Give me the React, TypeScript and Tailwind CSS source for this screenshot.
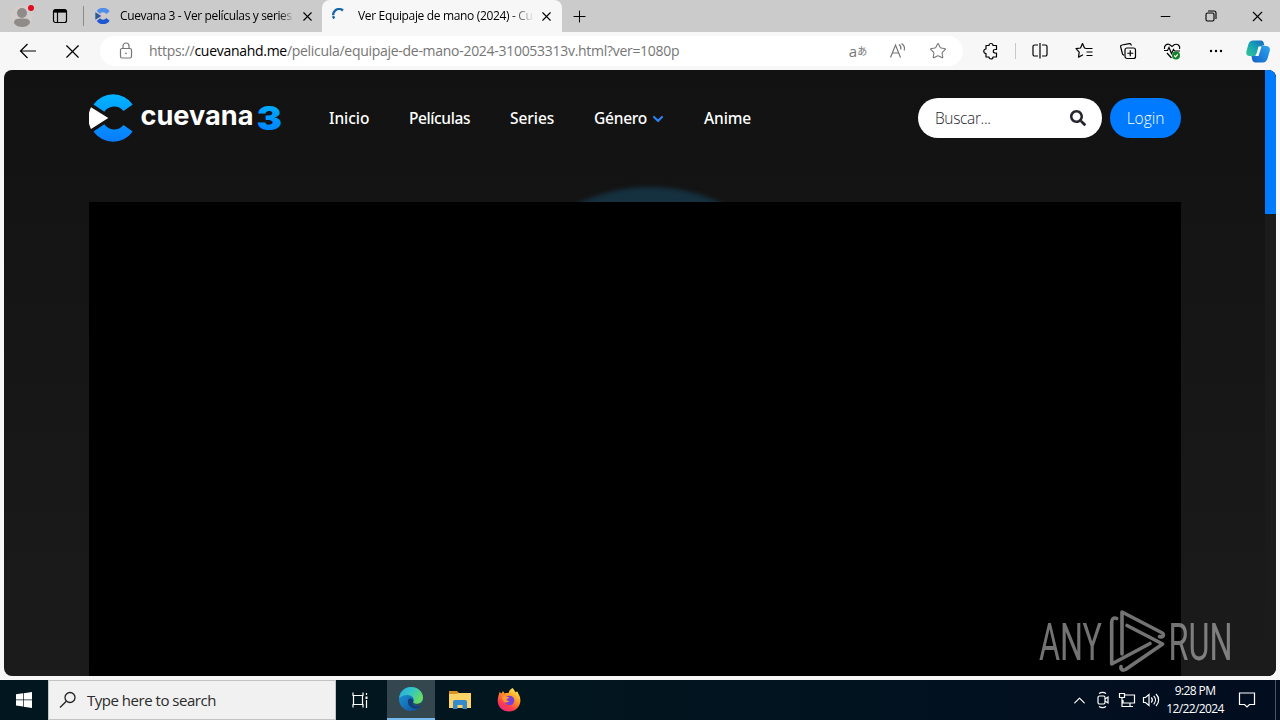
import React, { ReactNode } from "react"
import { X, Plus, Minus, ChevronDown, ChevronUp, Star } from "lucide-react"
import { FaSearch } from "react-icons/fa"

const navLinks = [
    { name: 'Inicio', width: 'w-10', spacing: 'tracking-[-0.05px]' },
    { name: 'Películas', width: 'w-[61px]', spacing: 'tracking-[-0.4px]' },
    { name: 'Series', width: 'w-11', spacing: 'tracking-[-0.05px]' },
    { name: 'Género', width: 'w-[70px]', spacing: 'tracking-[-0.25px]', menu: true },
    { name: 'Anime', width: 'w-12', spacing: 'tracking-[-0.1px]' },
]

const Cell = ({ children, className = 'w-11' }: { children: ReactNode, className?: string }) => (
    <div className={`flex h-full shrink-0 items-center justify-center ${className}`}>{children}</div>
)

const TabStrip = () => {
    return (
        <div className="flex h-8 w-full items-center bg-[#cbcbcb] text-black">
            <Cell className="w-11">
                <svg width="28" height="26" viewBox="0 0 28 26">
                    <circle cx="14" cy="13" r="11" fill="#d0cdcb" />
                    <circle cx="14" cy="10" r="5" fill="#8f8b89" />
                    <path d="M6 20c0-4 3-4.500 8-4.500s8 .5 8 4.500c-2 3-5 4-8 4s-6-1-8-4z" fill="#8f8b89" />
                    <circle cx="23" cy="5" r="3" fill="#e00b1c" />
                </svg>
            </Cell>
            <Cell className="w-8">
                <svg width="16" height="16" viewBox="0 0 16 16" fill="none" stroke="#000" strokeWidth="1.200">
                    <rect x="1.500" y="1.500" width="13" height="13" rx="2" />
                    <path d="M1.500 4h13M5.500 4v10.500" />
                    <path d="M2 3h12" strokeWidth="2.500" />
                </svg>
            </Cell>
            <div className="ml-[7px] h-5 w-px bg-[#8a8a8a]" />
            <div className="flex h-full w-[238px] items-center pl-[11px]">
                <svg width="16" height="16" viewBox="0 0 48 48">
                    <path d="M44 10A24 24 0 0 0 5 9l10 8a12 12 0 0 1 19 1z" fill="#4f8dec" />
                    <path d="M44 38A24 24 0 0 1 5 39l10-8a12 12 0 0 0 19-1z" fill="#1e57d0" />
                    <path d="M1 13l18 11L1 35z" fill="#31559d" />
                </svg>
                <div className="ml-[9px] w-[174px] bg-linear-to-r from-black from-90% to-[#cbcbcb] bg-clip-text text-xs whitespace-nowrap text-transparent tracking-[-0.36px]">Cuevana 3 - Ver películas y series</div>
                <X className="ml-[6px]" size={15} strokeWidth={1.800} />
            </div>
            <div className="flex h-full w-[240px] items-center rounded-t-lg bg-[#f7f7f7] pl-[10px]">
                <svg width="16" height="16" viewBox="0 0 16 16" fill="none" stroke="#1665ae" strokeWidth="2.400">
                    <path d="M2.200 10.500A6 6 0 0 1 11 2.500" strokeDasharray="2.600 .8 20" />
                </svg>
                <div className="ml-[10px] w-[176px] bg-linear-to-r from-black from-84% to-[#f7f7f7] bg-clip-text text-xs whitespace-nowrap text-transparent tracking-[-0.34px]">Ver Equipaje de mano (2024) - Cu</div>
                <X className="ml-[5px]" size={15} strokeWidth={1.800} />
            </div>
            <Cell className="w-[35px]"><Plus size={19} strokeWidth={1.300} /></Cell>
            <div className="ml-auto flex h-full">
                <Cell className="w-[46px]"><Minus size={15} strokeWidth={1.600} /></Cell>
                <Cell className="w-[46px]">
                    <svg width="12" height="12" viewBox="0 0 12 12" fill="none" stroke="#000" strokeWidth="1.100">
                        <rect x="1" y="3" width="8" height="8" rx="1.500" />
                        <path d="M3 1h6a2 2 0 0 1 2 2v6" />
                    </svg>
                </Cell>
                <Cell className="w-[46px]"><X size={17} strokeWidth={1.600} /></Cell>
            </div>
        </div>
    )
}

const Toolbar = () => {
    return (
        <div className="flex h-[38px] w-full items-center bg-[#f7f7f7] text-black">
            <Cell className="ml-1.5 w-11">
                <svg width="18" height="18" viewBox="0 0 18 18" fill="none" stroke="#000" strokeWidth="1.200"><path d="M17 9H1.500M8.500 2L1.500 9l7 7" /></svg>
            </Cell>
            <Cell><X size={23} strokeWidth={1.200} /></Cell>
            <div className="ml-1.5 flex h-[30px] w-[863px] shrink-0 items-center rounded-full bg-white pl-[17px] text-[#767676]">
                <svg width="18" height="18" viewBox="0 0 18 18" fill="none" stroke="currentColor" strokeWidth="1.200">
                    <rect x="3.500" y="6.500" width="11" height="9.500" rx="1.500" />
                    <path d="M6 6.500V4a3 3 0 0 1 6 0v2.500" />
                    <circle cx="9" cy="11.300" r=".9" fill="currentColor" stroke="none" />
                </svg>
                <div className="ml-[14px] text-sm whitespace-nowrap tracking-[-0.29px]">https://<span className="text-black">cuevanahd.me</span>/pelicula/equipaje-de-mano-2024-310053313v.html?ver=1080p</div>
                <div className="ml-auto flex h-full items-center pr-[5px]">
                    <Cell className="w-10">
                        <span className="flex items-center font-['Open_Sans','Noto_Sans_CJK_JP',sans-serif] leading-none"><span className="text-[15px]">a</span><span className="text-[10px]">あ</span></span>
                    </Cell>
                    <Cell className="w-10">
                        <svg width="18" height="18" viewBox="0 0 18 18" fill="none" stroke="currentColor" strokeWidth="1.200">
                            <path d="M1.500 15.500L6.500 3l5 12.500M3.300 11h6.500M10 2.500c1.700 1.200 2.200 3 1.700 5M12.500 1.500c3 2 3.500 4.500 2.700 7" />
                        </svg>
                    </Cell>
                    <Cell className="w-10"><Star size={18} strokeWidth={1.400} /></Cell>
                </div>
            </div>
            <Cell className="ml-1.5 w-11">
                <svg width="18" height="18" viewBox="0 0 18 18" fill="none" stroke="#000" strokeWidth="1.200" strokeLinejoin="round">
                    <path d="M4 3.500h3a2 2 0 0 1 4 0h3.500v4h-1.500a1.700 1.700 0 0 0 0 3.500h1.500v4H11a2 2 0 0 1-4 0H4v-3.500a2.200 2.200 0 0 1 0-4.500z" />
                </svg>
            </Cell>
            <div className="mx-0.5 h-4 w-px shrink-0 bg-[#c9c9c9]" />
            <Cell>
                <svg width="18" height="18" viewBox="0 0 18 18" fill="none" stroke="#000" strokeWidth="1.200">
                    <path d="M7 3H3.500a1.500 1.500 0 0 0-1.500 1.500v8A1.500 1.500 0 0 0 3.500 14H7M11 3h3.500A1.500 1.500 0 0 1 16 4.500v8a1.500 1.500 0 0 1-1.500 1.500H11M9 1v15.500" />
                </svg>
            </Cell>
            <Cell>
                <svg width="18" height="18" viewBox="0 0 18 18" fill="none" stroke="#000" strokeWidth="1.200" strokeLinejoin="round">
                    <path d="M11 6.500h6.500M11.500 10h6M11.500 13.500h6M11 6.500L9.500 6 7.500 1.500 5.500 6l-4.500.7 3.200 3.500-.7 4.900 4.500-2.300" />
                </svg>
            </Cell>
            <Cell>
                <svg width="18" height="18" viewBox="0 0 18 18" fill="none" stroke="#000" strokeWidth="1.200">
                    <rect x="6" y="6" width="10.500" height="10.500" rx="2" />
                    <path d="M11.250 8.300v6M8.300 11.250h6M12.500 3.500L12 2.500a1.500 1.500 0 0 0-1.700-.9L3 3A1.500 1.500 0 0 0 1.700 5L3.500 12a2 2 0 0 0 1.500 1.200" />
                </svg>
            </Cell>
            <Cell>
                <svg width="18" height="18" viewBox="0 0 18 18" fill="none" stroke="#000" strokeWidth="1.200">
                    <path d="M1.500 7C.8 3.500 4 1.500 6.500 2.500L9 4.500l2.500-2C15 1.500 17.500 4 16.500 7M1 8.500h3.500l1.500-3 2.500 6 2-4 1 1.500h5.500M4 11l4.500 5" />
                    <circle cx="13" cy="13.500" r="4" fill="#16812a" stroke="none" />
                    <path d="M11.200 13.500l1.300 1.300 2.300-2.500" stroke="#fff" />
                </svg>
            </Cell>
            <Cell>
                <svg width="16" height="16" viewBox="0 0 16 16"><circle cx="3" cy="8" r="1.200" /><circle cx="8" cy="8" r="1.200" /><circle cx="13" cy="8" r="1.200" /></svg>
            </Cell>
            <Cell className="w-10">
                <svg width="24" height="23" viewBox="0 0 24 23">
                    <defs>
                        <linearGradient id="copL" x1="0" y1="1" x2="1" y2="0"><stop offset="0" stopColor="#35c795" /><stop offset=".5" stopColor="#17a3b5" /><stop offset="1" stopColor="#1565c0" /></linearGradient>
                        <linearGradient id="copR" x1="0" y1="1" x2="1" y2="0"><stop offset="0" stopColor="#1460c8" /><stop offset="1" stopColor="#2ba6f0" /></linearGradient>
                    </defs>
                    <path d="M7 .5h8c2 0 2.500 1.500 3 3.500l.5 1.500c-4 0-5 1.500-6 5L11 16H3.500C.5 16-.3 13.500.5 11l2-7C3.200 1.800 4.800.5 7 .5z" fill="url(#copL)" />
                    <path d="M17 22.500H9.500c-2 0-3-1.500-3.500-3.500l-.5-3H8c3 0 4-1.500 5-5l1.500-5H20c3 0 4.500 2 3.700 5l-2 7c-.7 2.500-2.300 4.500-4.700 4.500z" fill="url(#copR)" />
                    <path d="M12.500 6.500h3l-3 9.500H9.200c1.800-2 2.300-6.500 3.300-9.500z" fill="#fff" />
                </svg>
            </Cell>
        </div>
    )
}

const Logo = () => (
    <svg width="194" height="50" viewBox="0 -1 194 50">
        <defs>
            <linearGradient id="brand" x1="0" y1="0" x2="0" y2="1"><stop offset="0" stopColor="#00b7ff" /><stop offset="1" stopColor="#0077ff" /></linearGradient>
            <linearGradient id="brandC" gradientUnits="userSpaceOnUse" x1="0" y1="0" x2="0" y2="48"><stop offset="0" stopColor="#00b4ff" /><stop offset="1" stopColor="#0a7cff" /></linearGradient>
        </defs>
        <path d="M43.700 10.500A24 24 0 0 0 4.500 10.500L15.300 17.700A12 12 0 0 1 34.500 17zM43.700 37.500A24 24 0 0 1 4.500 37.500L15.300 30.300A12 12 0 0 0 34.500 31z" fill="url(#brandC)" />
        <path d="M2 13.300L19.300 24 2 35A25 25 0 0 1 2 13.300z" fill="#fff" />
        <text x="51.500" y="31.300" textLength="113" lengthAdjust="spacingAndGlyphs" className="fill-white font-['Inter',sans-serif] text-[27px] font-bold">cuevana</text>
        <text x="167.500" y="36" textLength="25.500" lengthAdjust="spacingAndGlyphs" fill="url(#brand)" className="font-['Inter',sans-serif] text-[33px] font-black">3</text>
    </svg>
)

const Header = () => {
    return (
        <div className="relative mr-[84px] ml-[85px] flex h-24 items-center text-base text-white">
            <div className="w-[240px]"><Logo /></div>
            <div className="flex gap-10 pt-0.5">
                {navLinks.map((link) => (
                    <a key={link.name} className={`flex items-center font-['Noto_Sans','Open_Sans',sans-serif] text-[15.500px] font-medium whitespace-nowrap ${link.width} ${link.spacing}`}>
                        {link.name}
                        {link.menu && <ChevronDown className="ml-[3px] shrink-0 text-[#2d7ff0]" size={16} strokeWidth={3.200} />}
                    </a>
                ))}
            </div>
            <div className="ml-auto flex h-10 gap-2">
                <div className="flex w-[184px] items-center justify-between rounded-full bg-white pr-4 pl-[17px] text-[#25252d]">
                    <span className="pt-0.5 text-[15.500px] font-light tracking-[-0.35px]">Buscar...</span>
                    <FaSearch size={16} />
                </div>
                <button className="w-[71px] rounded-full bg-[#007aff] pt-0.5 text-[15.500px] font-light">Login</button>
            </div>
        </div>
    )
}

const Watermark = () => (
    <svg className="absolute right-[41px] bottom-0" width="197" height="67" viewBox="0 0 197 67">
        <g opacity=".55" fill="#d2d2d2" className="font-['Roboto',sans-serif] text-[52px]">
            <text x="1" y="50.500" textLength="63" lengthAdjust="spacingAndGlyphs">ANY</text>
            <text x="130.500" y="50.500" textLength="64" lengthAdjust="spacingAndGlyphs">RUN</text>
            <g fill="none" stroke="#d2d2d2" strokeWidth="3.600" strokeLinejoin="round" strokeLinecap="round">
                <path d="M78.700 9.500c-3-1.500-5 .5-5 3.500v42L112 34.500" />
                <path d="M84 45V3l39.500 20.500c3.500 2 1.500 5.500-2 4" />
                <path d="M89 16.500L124.700 35 87.500 60.500c-3 1.500-5 0-4.500-3" />
            </g>
        </g>
    </svg>
)

const Page = () => {
    return (
        <div className="flex h-[610px] w-full bg-[#f7f7f7] px-1 pb-1">
            <div className="relative flex h-full w-full overflow-hidden rounded-lg bg-linear-to-b from-[#121212] to-[#1b1b1b]">
                <div className="relative w-[1261px] overflow-hidden">
                    <div className="absolute top-[117px] left-[476px] size-[340px] rounded-full bg-[#15303f] blur-[2px]" />
                    <Header />
                    <div className="relative mx-[85px] mt-9 h-[474px] w-[1092px] bg-black" />
                </div>
                <div className="h-full w-[11px] bg-[#1b1b1b]">
                    <div className="h-36 bg-[#007aff]" />
                </div>
                <Watermark />
            </div>
        </div>
    )
}

const Taskbar = () => {
    return (
        <div className="flex h-10 w-full items-center bg-linear-to-r from-[#02161f] from-45% to-[#020d20] text-white">
            <Cell className="w-12">
                <svg width="16" height="16" viewBox="0 0 16 16" fill="#fff"><path d="M0 2.300L7 1.300V7.600H0zM7.700 1.200L16 0v7.600H7.700zM0 8.300h7v6.300l-7-1zM7.700 8.300H16V16l-8.300-1.200z" /></svg>
            </Cell>
            <div className="flex h-full w-72 items-center border border-[#c4c4c4] bg-[#f1f1f1] pl-[10px] text-[#2b2b2b]">
                <svg width="18" height="18" viewBox="0 0 18 18" fill="none" stroke="#222" strokeWidth="1.300"><circle cx="11" cy="6.500" r="5" /><path d="M7.300 10.200L1 16.500" /></svg>
                <span className="ml-[10px] text-[15px] whitespace-nowrap tracking-[-0.48px]">Type here to search</span>
            </div>
            <Cell className="w-[51px] pr-1">
                <svg width="18" height="18" viewBox="0 0 18 18" fill="none" stroke="#fff" strokeWidth="1.200"><path d="M2 1.500V4.500H12V1.500M2 16.500V13.500H12V16.500M2.500 4.500v9M11.500 4.500v9M15.500 2v2M15.500 9v8" /><rect x="14.500" y="5.500" width="2" height="2.500" fill="#fff" stroke="none" /></svg>
            </Cell>
            <div className="flex h-full w-12 items-center justify-center border-b-2 border-[#76b9ed] bg-[#34474e]">
                <svg width="24" height="24" viewBox="0 0 24 24">
                    <defs>
                        <linearGradient id="edgeTop" x1="0" y1="0" x2="1" y2=".5"><stop offset="0" stopColor="#2aa9df" /><stop offset=".5" stopColor="#31c5c8" /><stop offset="1" stopColor="#68dc62" /></linearGradient>
                        <linearGradient id="edgeLow" x1="0" y1="0" x2="1" y2="1"><stop offset="0" stopColor="#1b9de2" /><stop offset="1" stopColor="#104a94" /></linearGradient>
                    </defs>
                    <circle cx="12" cy="12" r="12" fill="url(#edgeLow)" />
                    <path d="M.2 11C1 4.500 6 0 12 0c7 0 12 5 12 10.500 0 4-3 6.500-6.500 6.500-2.500 0-4-1-3.300-2.200C15.700 12 13.500 8 8.500 8 4.500 8 1.500 9.500.2 11z" fill="url(#edgeTop)" />
                    <path d="M9.500 12c-2 5 1.500 9 6 9.500 3 .3 5-1 6.700-2.800-4 1.300-8 .3-8.200-2.700-.1-1 .4-1.500.5-2.500-1-2.200-4-2.500-5-1.500z" fill="#123f78" />
                    <path d="M14 15c.2 3.500 5 4.500 8.300 3.200L24 15l-3 1.200c-3 1.300-6.500.5-7-1.200z" fill="#34474e" />
                </svg>
            </div>
            <Cell className="w-[50px]">
                <svg width="22" height="20" viewBox="0 0 22 20">
                    <path d="M0 2V1h8l2 2h12v3H0z" fill="#d99425" />
                    <path d="M0 4h8l1.500-1H22v15H0z" fill="#fbd367" />
                    <path d="M4 19v-8l1.500-1h11l1.500 1v8h-4.500v-4h-5v4z" fill="#368acb" />
                </svg>
            </Cell>
            <Cell className="w-12">
                <svg width="24" height="24" viewBox="0 0 24 24">
                    <defs>
                        <linearGradient id="fox" x1=".8" y1="0" x2=".2" y2="1"><stop offset="0" stopColor="#fff04b" /><stop offset=".4" stopColor="#ff9526" /><stop offset=".75" stopColor="#ff3950" /><stop offset="1" stopColor="#e52985" /></linearGradient>
                    </defs>
                    <path d="M15.500 0c1.500 1 2 3 3 4.200l2-1c-.3 1.500 2.900 4 2.900 9C23.400 18.800 18.300 23.500 12 23.500S.7 19 .7 12.700C.7 9 2 6.500 2.500 4l2 1.500L6 3l1.500 2.500c1.500-.5 3-.5 4-.3C12 2.800 13.500 1 15.500 0z" fill="url(#fox)" />
                    <circle cx="12.500" cy="12.500" r="4.800" fill="#7a3fd6" />
                    <path d="M5 9c2-1.500 4-.5 5 0h2c0 1.500-1.500 1.500-2.500 2 0 1.500 1.500 2.200 3 2-1.500 2-5.500 2-6.500-.8C5.500 12 4.700 10.500 5 9z" fill="#ff9a2d" />
                </svg>
            </Cell>
            <div className="ml-auto flex h-full items-center">
                <Cell className="w-6"><ChevronUp size={19} strokeWidth={1.500} /></Cell>
                <Cell className="w-6">
                    <svg width="14" height="18" viewBox="0 0 14 18" fill="none" stroke="#fff" strokeWidth="1.200"><rect x="2" y="5" width="7" height="8" rx="1.500" /><path d="M9 8l3-2v6l-3-2M3 2.500c2-1.300 5-1.300 7 0M3 15.500c2 1.300 5 1.300 7 0" /></svg>
                </Cell>
                <Cell className="w-6">
                    <svg width="18" height="16" viewBox="0 0 18 16" fill="none" stroke="#fff" strokeWidth="1.200"><path d="M7 3h9.500v8H5V8M9 14.500h6M12 11v3.500M1.500 1.500h5v4h-5zM4 5.500v9h5" /></svg>
                </Cell>
                <Cell className="w-6">
                    <svg width="18" height="16" viewBox="0 0 18 16" fill="none" stroke="#fff" strokeWidth="1.200"><path d="M1.500 5.500h2L7 2.500v11L3.500 10.500h-2zM9.300 5.500c1.300 1.500 1.300 3.500 0 5M11.700 3.800c2.300 2.500 2.300 6 0 8.500M14 2c3.500 3.500 3.500 8.500 0 12" /></svg>
                </Cell>
                <div className="flex w-16 flex-col items-center text-xs leading-[18px] whitespace-nowrap tracking-[-0.6px]">
                    <span>9:28 PM</span>
                    <span>12/22/2024</span>
                </div>
                <Cell className="mr-2 w-10">
                    <svg width="18" height="18" viewBox="0 0 18 18" fill="none" stroke="#fff" strokeWidth="1.200"><path d="M1.500 2h15v11.500h-5L9 16l-2.500-2.500h-5z" /></svg>
                </Cell>
                <div className="mr-[4px] h-full w-px bg-[#4a5560]" />
            </div>
        </div>
    )
}

const App = () => {
    return (
        <div className="flex h-[720px] w-[1280px] flex-col overflow-hidden bg-white font-['Open_Sans','Noto_Sans',sans-serif]">
            <TabStrip />
            <Toolbar />
            <Page />
            <Taskbar />
        </div>
    )
}

export default App
